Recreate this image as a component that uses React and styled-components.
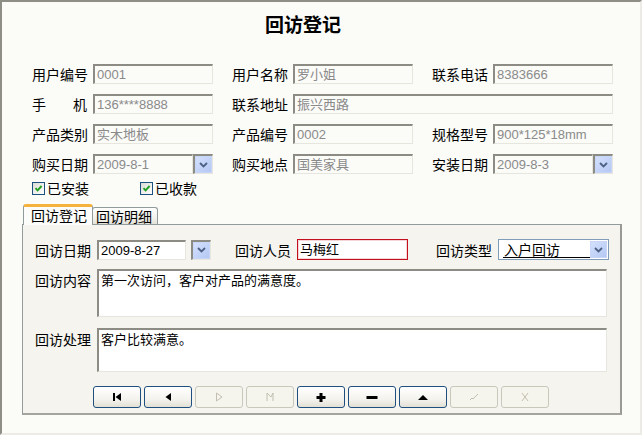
import styled, { createGlobalStyle } from 'styled-components';

const Global = createGlobalStyle`
  html, body { margin: 0; padding: 0; background: #fbfbf7; }
  * { box-sizing: border-box; }
`;

const cjk = `"Noto Sans CJK SC", "Liberation Sans", sans-serif`;
const latin = `"Liberation Sans", "Noto Sans CJK SC", sans-serif`;

const Frame = styled.div`
  width: 642px;
  height: 435px;
  border-top: 2px solid #8e8e86;
  border-left: 2px solid #8e8e86;
  border-right: 2px solid #ecebe6;
  border-bottom: 2px solid #ecebe6;
  background: #fbfbf7;
  font-family: ${cjk};
  color: #000;
  overflow: hidden;
`;

const Title = styled.div`
  padding: 10px 0 0 263px;
  height: 36px;
  line-height: 24px;
  font-size: 19px;
  font-weight: 700;
`;

const Form = styled.div`
  padding-left: 30px;
  margin-top: 26px;
`;

const Rows = styled.div`
  display: flex;
  flex-direction: column;
  gap: 10px;
`;

const Row = styled.div`
  display: flex;
  align-items: center;
  height: 20px;
  gap: 19px;
`;

const Group = styled.div`
  display: flex;
  align-items: center;
  gap: ${p => p.$gap ?? 6}px;
  margin-left: ${p => p.$ml || 0}px;
`;

const Label = styled.div`
  width: 55px;
  font-size: 14px;
  line-height: 20px;
  white-space: nowrap;
  display: flex;
  justify-content: ${p => (p.$spread ? 'space-between' : 'flex-start')};
  align-self: ${p => (p.$top ? 'flex-start' : 'center')};
  margin-top: ${p => (p.$top ? 1 : 0)}px;
`;

const Field = styled.div`
  width: ${p => p.$w || 120}px;
  height: ${p => p.$h || 20}px;
  border-top: 2px solid #8c8c84;
  border-left: 2px solid #8c8c84;
  border-right: 1px solid #e6e5de;
  border-bottom: 1px solid #e6e5de;
  background: ${p => (p.$white ? '#ffffff' : '#fbfbf8')};
  color: ${p => (p.$dark ? '#000' : '#8a8a8a')};
  font-family: ${latin};
  font-size: 13px;
  line-height: 17px;
  padding-left: 2px;
  white-space: nowrap;
  overflow: hidden;
`;

const RedField = styled.div`
  width: 111px;
  height: 21px;
  border: 1px solid #c4101c;
  box-shadow: inset 0 0 0 1px #f4d6d8;
  background: #fff;
  font-family: ${latin};
  font-size: 13px;
  line-height: 19px;
  padding-left: 2px;
`;

const DropFrame = styled.div`
  width: 20px;
  height: 20px;
  border-top: 2px solid #8c8c84;
  border-left: 2px solid #8c8c84;
  border-right: 1px solid #e6e5de;
  border-bottom: 1px solid #e6e5de;
  display: flex;
`;

const DropFace = styled.div`
  flex: 1;
  display: flex;
  align-items: center;
  justify-content: center;
  background: linear-gradient(135deg, #d4e0fc, #b4c8f4);
  border: 1px solid #c7d6f7;
`;

const Chevron = () => (
  <svg width="9" height="6" viewBox="0 0 9 6">
    <path d="M1 1 L4.5 4.5 L8 1" fill="none" stroke="#4d6185" strokeWidth="1.8" />
  </svg>
);

const DateBox = ({ value, w = 100, gap = 0, white, dark }) => (
  <Group $gap={gap}>
    <Field $w={w} $white={white} $dark={dark}>{value}</Field>
    <DropFrame>
      <DropFace>
        <Chevron />
      </DropFace>
    </DropFrame>
  </Group>
);

const Select = styled.div`
  width: 111px;
  height: 21px;
  border: 1px solid #7f9db9;
  background: #fff;
  display: flex;
  align-items: stretch;
  padding: 1px;
`;

const SelectText = styled.div`
  flex: 1;
  padding-left: 3px;
  font-size: 14px;
  line-height: 17px;
`;

const SelectLine = styled.span`
  display: inline-block;
  width: 87px;
  border-bottom: 1.5px solid #000;
  line-height: 16px;
  padding-left: 1px;
`;

const SelectBtn = styled(DropFace)`
  flex: 0 0 17px;
`;

const CheckRow = styled.div`
  display: flex;
  margin-top: 8px;
  height: 13px;
  align-items: center;
`;

const CheckItem = styled.div`
  display: flex;
  align-items: center;
  gap: 2px;
  width: ${p => p.$w || 'auto'};
  font-size: 14px;
  line-height: 13px;
`;

const Box = styled.div`
  width: 13px;
  height: 13px;
  border: 1px solid #1c5180;
  background: linear-gradient(135deg, #dcdcd6, #ffffff);
  display: flex;
  align-items: center;
  justify-content: center;
`;

const Check = ({ children, w }) => (
  <CheckItem $w={w}>
    <Box>
      <svg width="9" height="9" viewBox="0 0 9 9">
        <path d="M1.5 4.2 L3.6 6.4 L7.6 2" fill="none" stroke="#21a121" strokeWidth="1.9" />
      </svg>
    </Box>
    {children}
  </CheckItem>
);

const TabStrip = styled.div`
  display: flex;
  align-items: flex-end;
  height: 20px;
  margin: 9px 0 0 -10px;
  padding-left: 1px;
  position: relative;
  z-index: 1;
`;

const Tab = styled.div`
  height: ${p => (p.$active ? 21 : 17)}px;
  width: ${p => (p.$active ? 70 : 66)}px;
  font-size: 14px;
  line-height: ${p => (p.$active ? 17 : 16)}px;
  padding-left: ${p => (p.$active ? 7 : 3)}px;
  border: 1px solid #919b9c;
  border-bottom: none;
  border-top: ${p => (p.$active ? '3px solid #f5b33d' : '1px solid #919b9c')};
  border-radius: 3px 3px 0 0;
  margin-bottom: ${p => (p.$active ? -1 : 0)}px;
  background: ${p =>
    p.$active ? '#fcfcfa' : 'linear-gradient(#ffffff, #f0efe9 70%, #e3e1d8)'};
  margin-left: ${p => (p.$active ? 0 : -1)}px;
`;

const Panel = styled.div`
  width: 600px;
  margin-left: -10px;
  border: 1px solid #919b9c;
  border-right: 2px solid #9a9a95;
  border-bottom: 2px solid #a5a59f;
  background: #f5f4ef;
  padding: 14px 13px 5px 12px;
`;

const PanelRow = styled.div`
  display: flex;
  align-items: ${p => (p.$top ? 'flex-start' : 'center')};
  height: ${p => p.$h || 21}px;
  margin-top: ${p => p.$mt || 0}px;
  gap: 7px;
`;

const Memo = styled(Field)`
  width: 510px;
  font-family: ${cjk};
  line-height: 18px;
  padding-left: 2px;
`;

const NavBar = styled.div`
  display: flex;
  gap: 3px;
  margin: 14px 0 0 58px;
`;

const NavButton = styled.div`
  width: 48px;
  height: 22px;
  border-radius: 3px;
  border: 1px solid ${p => (p.$off ? '#cac8bb' : '#1e4f7f')};
  background: ${p =>
    p.$off ? '#f5f4ed' : 'linear-gradient(#ffffff, #f4f3ee 60%, #e2e0d6)'};
  display: flex;
  align-items: center;
  justify-content: center;
`;

const ink = '#000';
const dim = '#c2bfb0';

const NavIcon = ({ kind }) => {
  const shapes = {
    first: (
      <>
        <rect x="2" y="1" width="2" height="8" fill={ink} />
        <polygon points="10,1 10,9 4.5,5" fill={ink} />
      </>
    ),
    prior: <polygon points="9,1 9,9 3.5,5" fill={ink} />,
    next: <polygon points="3.5,1 9,5 3.5,9" fill="none" stroke={dim} strokeWidth="1" />,
    last: (
      <path d="M3 9 V1 L7 5 L9 1 V9" fill="none" stroke={dim} strokeWidth="1" />
    ),
    insert: (
      <>
        <rect x="1.5" y="4" width="9" height="3" fill={ink} />
        <rect x="4.5" y="1" width="3" height="9" fill={ink} />
      </>
    ),
    remove: <rect x="0.5" y="4" width="11" height="3" fill={ink} />,
    edit: <polygon points="1,8 6,3 11,8" fill={ink} />,
    post: <path d="M2 8 L4 6 L5 7 L10 2" fill="none" stroke={dim} strokeWidth="1" />,
    cancel: <path d="M3 1 L9 9 M9 1 L3 9" fill="none" stroke={dim} strokeWidth="1" />,
  };
  return (
    <svg width="12" height="10" viewBox="0 0 12 10">
      {shapes[kind]}
    </svg>
  );
};

const navs = [
  ['first', false],
  ['prior', false],
  ['next', true],
  ['last', true],
  ['insert', false],
  ['remove', false],
  ['edit', false],
  ['post', true],
  ['cancel', true],
];

export default function App() {
  return (
    <Frame>
      <Global />
      <Title>回访登记</Title>
      <Form>
        <Rows>
          <Row>
            <Group>
              <Label>用户编号</Label>
              <Field>0001</Field>
            </Group>
            <Group>
              <Label>用户名称</Label>
              <Field>罗小姐</Field>
            </Group>
            <Group>
              <Label>联系电话</Label>
              <Field>8383666</Field>
            </Group>
          </Row>
          <Row>
            <Group>
              <Label $spread>
                <span>手</span>
                <span>机</span>
              </Label>
              <Field>136****8888</Field>
            </Group>
            <Group>
              <Label>联系地址</Label>
              <Field $w={320}>振兴西路</Field>
            </Group>
          </Row>
          <Row>
            <Group>
              <Label>产品类别</Label>
              <Field>实木地板</Field>
            </Group>
            <Group>
              <Label>产品编号</Label>
              <Field>0002</Field>
            </Group>
            <Group>
              <Label>规格型号</Label>
              <Field>900*125*18mm</Field>
            </Group>
          </Row>
          <Row>
            <Group>
              <Label>购买日期</Label>
              <DateBox value="2009-8-1" />
            </Group>
            <Group>
              <Label>购买地点</Label>
              <Field>国美家具</Field>
            </Group>
            <Group>
              <Label>安装日期</Label>
              <DateBox value="2009-8-3" />
            </Group>
          </Row>
        </Rows>
        <CheckRow>
          <Check w="108px">已安装</Check>
          <Check>已收款</Check>
        </CheckRow>
        <TabStrip>
          <Tab $active>回访登记</Tab>
          <Tab>回访明细</Tab>
        </TabStrip>
        <Panel>
          <PanelRow>
            <Group $gap={7}>
              <Label>回访日期</Label>
              <DateBox value="2009-8-27" w={89} gap={5} white dark />
            </Group>
            <Group $gap={7} $ml={17}>
              <Label>回访人员</Label>
              <RedField>马梅红</RedField>
            </Group>
            <Group $gap={7} $ml={21}>
              <Label>回访类型</Label>
              <Select>
                <SelectText>
                  <SelectLine>入户回访</SelectLine>
                </SelectText>
                <SelectBtn>
                  <Chevron />
                </SelectBtn>
              </Select>
            </Group>
          </PanelRow>
          <PanelRow $top $h={48} $mt={9}>
            <Label $top>回访内容</Label>
            <Memo $h={48} $white $dark>
              第一次访问，客户对产品的满意度。
            </Memo>
          </PanelRow>
          <PanelRow $top $h={44} $mt={11}>
            <Label $top>回访处理</Label>
            <Memo $h={44} $white $dark>
              客户比较满意。
            </Memo>
          </PanelRow>
          <NavBar>
            {navs.map(([kind, off]) => (
              <NavButton key={kind} $off={off}>
                <NavIcon kind={kind} />
              </NavButton>
            ))}
          </NavBar>
        </Panel>
      </Form>
    </Frame>
  );
}
